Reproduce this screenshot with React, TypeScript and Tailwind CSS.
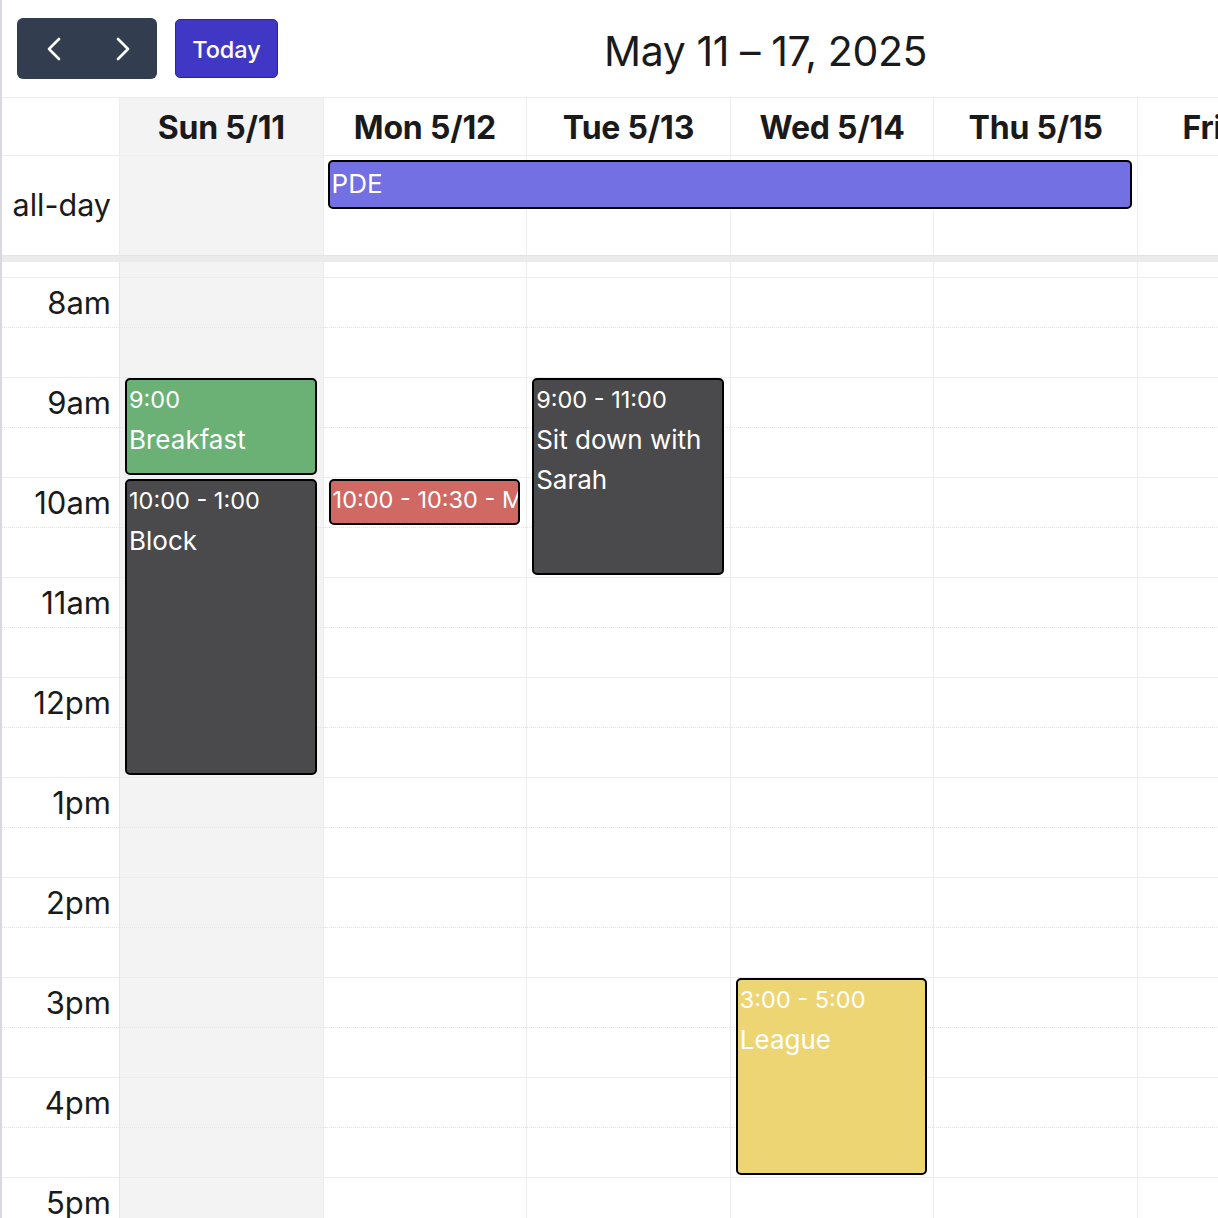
import { ChevronLeft, ChevronRight } from "lucide-react";

interface CalEvent {
  id: string;
  time: string;
  title: string;
  className: string;
  single?: boolean;
}

interface Day {
  label: string;
  shaded?: boolean;
  events: CalEvent[];
}

const days: Day[] = [
  {
    label: "Sun 5/11",
    shaded: true,
    events: [
      { id: "breakfast", time: "9:00", title: "Breakfast", className: "top-[116px] h-[97px] bg-[#6bb176]" },
      { id: "block", time: "10:00 - 1:00", title: "Block", className: "top-[217px] h-[296px] bg-[#4a4a4c]" },
    ],
  },
  {
    label: "Mon 5/12",
    events: [
      {
        id: "meeting",
        time: "10:00 - 10:30 - Meeting",
        title: "",
        single: true,
        className: "top-[217px] h-[46px] bg-[#d06964]",
      },
    ],
  },
  {
    label: "Tue 5/13",
    events: [
      { id: "sarah", time: "9:00 - 11:00", title: "Sit down with Sarah", className: "top-[116px] h-[197px] bg-[#4a4a4c]" },
    ],
  },
  {
    label: "Wed 5/14",
    events: [{ id: "league", time: "3:00 - 5:00", title: "League", className: "top-[716px] h-[197px] bg-[#edd574]" }],
  },
  { label: "Thu 5/15", events: [] },
  { label: "Fri 5/16", events: [] },
  { label: "Sat 5/17", events: [] },
];

const hours = ["8am", "9am", "10am", "11am", "12pm", "1pm", "2pm", "3pm", "4pm", "5pm", "6pm"];

const Slots = ({ labels }: { labels: boolean }) => {
  return (
    <>
      <div className="h-[15px]"></div>
      {hours.map((hour) => (
        <div key={hour}>
          <div className="h-[50px] border-t border-[#ededed] flex justify-end items-start">
            {labels && <span className="pr-[8px] pt-[6px] text-[31px] leading-[38px] text-[#1a1a1a]">{hour}</span>}
          </div>
          <div className="h-[50px] border-t border-dotted border-[#e4e4e4]"></div>
        </div>
      ))}
    </>
  );
};

const EventBlock = ({ event }: { event: CalEvent }) => {
  return (
    <div
      className={`absolute left-[5px] right-[6px] border-2 border-black rounded-[5px] px-[2px] overflow-hidden text-white ${event.className}`}
    >
      {event.single ? (
        <div className="text-[23.5px] leading-[38px] whitespace-nowrap">{event.time}</div>
      ) : (
        <>
          <div className="text-[23.5px] leading-[40px] whitespace-nowrap">{event.time}</div>
          <div className="text-[26px] leading-[40px]">{event.title}</div>
        </>
      )}
    </div>
  );
};

const App = () => {
  return (
    <div className="w-[1218px] h-[1218px] overflow-hidden bg-white border-l-2 border-[#d8d8e0] font-['Inter','Noto_Sans',sans-serif] text-[#1a1a1a]">
      <div className="w-[1546px]">
        <div className="h-[97px] flex items-center pl-[15px]">
          <div className="flex h-[61px] w-[140px] rounded-[6px] bg-[#323e50] text-white">
            <button className="flex-1 flex items-center justify-center pl-[2px]">
              <ChevronLeft size={40} strokeWidth={1.6} />
            </button>
            <button className="flex-1 flex items-center justify-center">
              <ChevronRight size={40} strokeWidth={1.6} />
            </button>
          </div>
          <button className="ml-[18px] h-[59px] w-[103px] rounded-[5px] bg-[#4038c4] border border-[#2c2f5a] text-white text-[23.5px] font-medium pt-[3px]">
            Today
          </button>
          <h2 className="ml-[326px] mt-[5px] text-[41px] leading-none tracking-[-0.4px]">May 11 – 17, 2025</h2>
        </div>

        <div className="grid grid-cols-[117px_repeat(7,203.6px)] h-[58px] border-t border-[#ededed]">
          <div></div>
          {days.map((day) => (
            <div
              key={day.label}
              className={`flex items-center justify-center pt-[2px] border-l border-[#ededed] text-[32px] font-bold tracking-[-0.2px] ${
                day.shaded ? "bg-[#f3f3f3]" : ""
              }`}
            >
              {day.label}
            </div>
          ))}
        </div>

        <div className="grid grid-cols-[117px_repeat(7,203.6px)] grid-rows-[99px] border-t border-[#ededed]">
          <div className="row-start-1 col-start-1 flex items-center justify-end pr-[8px] pb-[2px] text-[30.5px]">all-day</div>
          {days.map((day, i) => (
            <div
              key={day.label}
              className={`row-start-1 border-l border-[#ededed] ${day.shaded ? "bg-[#f3f3f3]" : ""}`}
              style={{ gridColumnStart: i + 2 }}
            ></div>
          ))}
          <div className="row-start-1 col-start-3 col-end-7 self-start mt-[4px] ml-[5px] mr-[5px] h-[49px] rounded-[5px] border-2 border-black bg-[#7370e3] text-white text-[26px] leading-[44px] px-[2px]">
            PDE
          </div>
        </div>

        <div className="h-[7px] bg-[#ebebeb] border-t border-[#e3e3e3]"></div>

        <div className="grid grid-cols-[117px_repeat(7,203.6px)]">
          <div className="flex flex-col">
            <Slots labels />
          </div>
          {days.map((day) => (
            <div
              key={day.label}
              className={`relative flex flex-col border-l ${
                day.shaded ? "bg-[#f3f3f3] border-[#e6e6e6]" : "border-[#ededed]"
              }`}
            >
              <Slots labels={false} />
              {day.events.map((event) => (
                <EventBlock key={event.id} event={event} />
              ))}
            </div>
          ))}
        </div>
      </div>
    </div>
  );
};

export default App;
